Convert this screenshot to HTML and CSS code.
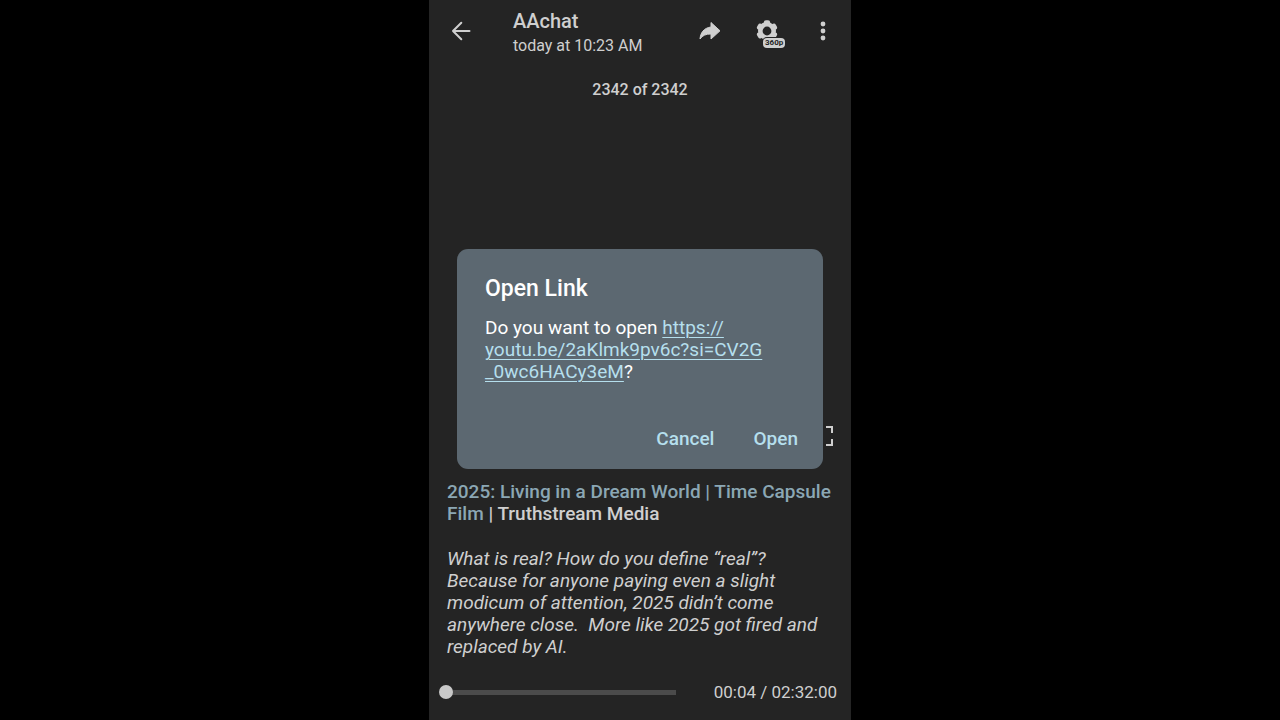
FILE: index.html
```html
<!DOCTYPE html>
<html lang="en">
<head>
  <meta charset="UTF-8" />
  <meta name="viewport" content="width=device-width, initial-scale=1.0"/>
  <title>AAchat</title>
  <link rel="stylesheet" href="styles.css">
</head>
<body>

  <main class="viewer">
    <header class="top-bar">
      <button class="icon-button" aria-label="Back">
        <svg width="20" height="20" viewBox="0 0 20 20" fill="none" stroke="currentColor" stroke-width="2" stroke-linecap="round" stroke-linejoin="round">
          <path d="M18.5 10H2M10.3 1.7L2 10l8.3 8.3"/>
        </svg>
      </button>
      <div class="chat-info">
        <h1>AAchat</h1>
        <p>today at 10:23 AM</p>
      </div>
      <button class="icon-button" aria-label="Share">
        <svg width="22" height="20" viewBox="0 0 22 20" fill="currentColor" stroke="currentColor" stroke-linejoin="round">
          <path d="M12 1.5L21 9.8L12 18V13C7 12.8 3.5 14.5 1 18C1.5 12 4.5 7 12 6Z"/>
        </svg>
      </button>
      <button class="icon-button quality" aria-label="Quality">
        <svg width="24" height="24" viewBox="0 0 24 24" fill="none" stroke="currentColor">
          <circle cx="12" cy="12" r="6.7" stroke-width="4.6"/>
          <path stroke-width="4.4" stroke-linecap="round" d="M11 3.4h2M11 20.600h2M18.900 6.700l1 1.800M4.100 15.500l1 1.800M18.900 17.300l1-1.800M4.100 8.500l1-1.800"/>
        </svg>
        <span class="badge">360p</span>
      </button>
      <button class="icon-button" aria-label="More">
        <svg width="6" height="20" viewBox="0 0 6 20" fill="currentColor">
          <circle cx="3" cy="3" r="2.4"/>
          <circle cx="3" cy="10" r="2.4"/>
          <circle cx="3" cy="17" r="2.4"/>
        </svg>
      </button>
    </header>

    <p class="counter">2342 of 2342</p>

    <section class="media">
      <button class="icon-button" aria-label="Full screen">
        <svg width="20" height="20" viewBox="0 0 20 20" fill="none" stroke="currentColor" stroke-width="2">
          <path d="M1 7V1h6M13 1h6v6M19 13v6h-6M7 19H1v-6"/>
        </svg>
      </button>
    </section>

    <section class="caption">
      <h2><a href="#">2025: Living in a Dream World | Time Capsule Film</a> | Truthstream Media</h2>
      <p>What is real? How do you define “real”? Because for anyone paying even a slight modicum of attention, 2025 didn’t come anywhere close.&nbsp; More like 2025 got fired and replaced by AI.</p>
    </section>

    <footer class="player">
      <input type="range" min="0" max="9120" value="4" aria-label="Position" />
      <span>00:04 / 02:32:00</span>
    </footer>

    <div class="overlay">
      <div class="dialog" role="dialog" aria-labelledby="dialogTitle">
        <h2 id="dialogTitle">Open Link</h2>
        <p>Do you want to open <a href="#">https://<wbr>youtu.be/2aKlmk9pv6c?si=CV2G<wbr>_0wc6HACy3eM</a>?</p>
        <div class="actions">
          <button>Cancel</button>
          <button>Open</button>
        </div>
      </div>
    </div>
  </main>

</body>
</html>
```

FILE: styles.css
```css
* {
  box-sizing: border-box;
}
body {
  margin: 0;
  background: #000;
  color: #cfcfcf;
  font-family: Roboto, sans-serif;
}
h1, h2, p {
  margin: 0;
  font-weight: 500;
}
button {
  padding: 0;
  border: none;
  background: none;
  color: inherit;
  font: inherit;
  cursor: pointer;
}
.viewer {
  position: relative;
  display: flex;
  flex-direction: column;
  width: 100%;
  max-width: 422px;
  min-height: 100vh;
  margin: 0 auto;
  background: #242424;
}

/* top bar */
.top-bar {
  display: flex;
  align-items: center;
  padding: 4px 25px 0 22px;
}
.icon-button {
  display: flex;
  flex-shrink: 0;
}
.chat-info {
  flex: 1;
  padding: 4px 0 0 42px;
}
.chat-info h1 {
  font-size: 20px;
  line-height: 26px;
}
.chat-info p {
  font-size: 16px;
  font-weight: 400;
  line-height: 24px;
}
.top-bar .quality {
  position: relative;
  margin: 0 41px 0 34px;
}
.badge {
  position: absolute;
  top: 19px;
  left: 8px;
  padding: 0 2px;
  border-radius: 4px;
  background: #cfcfcf;
  box-shadow: 0 0 0 1px #242424;
  color: #242424;
  font-size: 8px;
  font-weight: 700;
  line-height: 10px;
}
.counter {
  padding-top: 20px;
  font-size: 16px;
  line-height: 24px;
  text-align: center;
}

/* video area */
.media {
  display: flex;
  flex: 1;
  align-items: flex-end;
  justify-content: flex-end;
  padding: 0 18px 35px;
}

/* caption */
.caption {
  padding: 0 18px;
  font-size: 19px;
  line-height: 22px;
}
.caption h2 {
  margin-bottom: 23px;
  font-size: 19px;
}
.caption a {
  color: #8ba7b4;
  text-decoration: none;
}
.caption p {
  font-style: italic;
  font-weight: 400;
}

/* player */
.player {
  display: flex;
  align-items: center;
  justify-content: space-between;
  padding: 22px 14px 16px 10px;
  font-size: 17px;
  line-height: 24px;
}
.player input {
  appearance: none;
  width: 60%;
  max-width: 240px;
  height: 14px;
  margin: 0;
  background: linear-gradient(#4b4b4b, #4b4b4b) center / calc(100% - 4px) 5px no-repeat;
}
.player input::-webkit-slider-thumb {
  appearance: none;
  width: 14px;
  height: 14px;
  border-radius: 50%;
  background: #c8c8c8;
}

/* dialog */
.overlay {
  position: absolute;
  inset: 0;
  display: flex;
  align-items: center;
  justify-content: center;
  padding: 0 28px 2px;
}
.dialog {
  width: 100%;
  padding: 25px 25px 18px 28px;
  border-radius: 11px;
  background: #5c6871;
  color: #fff;
}
.dialog h2 {
  margin-bottom: 13px;
  font-size: 23px;
  line-height: 30px;
}
.dialog p {
  padding-right: 30px;
  font-size: 19px;
  font-weight: 400;
  line-height: 22px;
}
.dialog a {
  color: #b5dfed;
  text-decoration-thickness: 1px;
  text-underline-offset: 3px;
}
.actions {
  display: flex;
  justify-content: flex-end;
  gap: 39px;
  margin-top: 44px;
  color: #b5dfed;
  font-size: 19px;
  font-weight: 500;
  line-height: 24px;
}
```
